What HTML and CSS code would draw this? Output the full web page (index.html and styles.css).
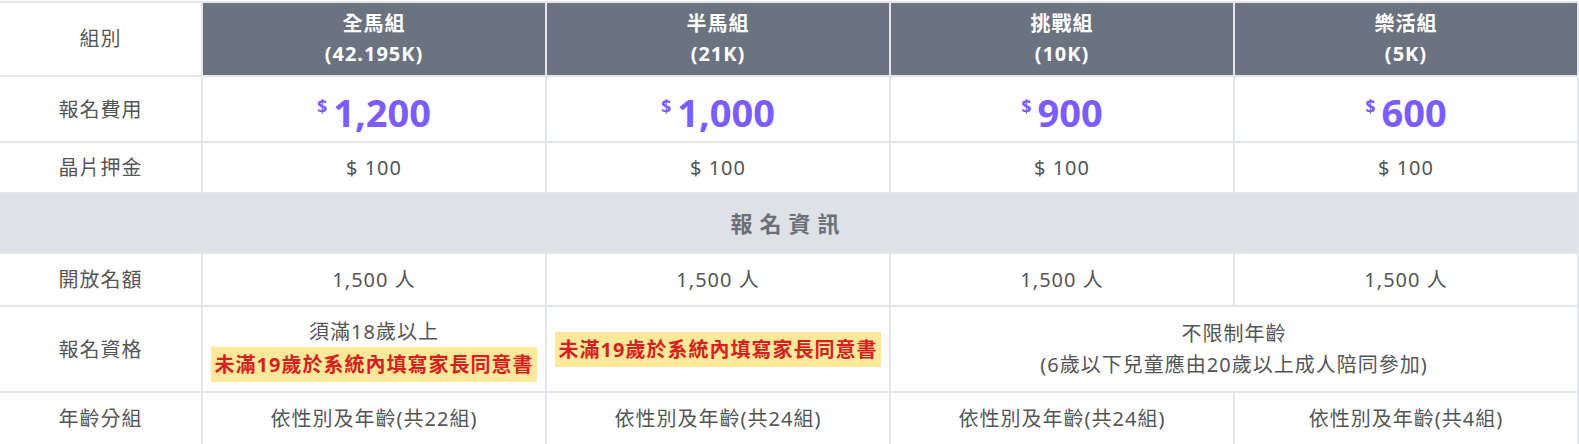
FILE: index.html
```html
<!DOCTYPE html>
<html lang="zh-Hant">
<head>
<meta charset="utf-8">
<title>報名資訊</title>
<link rel="stylesheet" href="styles.css">
</head>
<body>
<table class="race-table">
  <colgroup>
    <col class="col-label">
    <col><col><col><col>
  </colgroup>
  <thead>
    <tr>
      <th class="label">組別</th>
      <th class="group">全馬組<br>(42.195K)</th>
      <th class="group">半馬組<br>(21K)</th>
      <th class="group">挑戰組<br>(10K)</th>
      <th class="group">樂活組<br>(5K)</th>
    </tr>
  </thead>
  <tbody>
    <tr class="row-price">
      <th class="label">報名費用</th>
      <td><div class="price"><span class="cur">$</span><span class="amt">1,200</span></div></td>
      <td><div class="price"><span class="cur">$</span><span class="amt">1,000</span></div></td>
      <td><div class="price"><span class="cur">$</span><span class="amt">900</span></div></td>
      <td><div class="price"><span class="cur">$</span><span class="amt">600</span></div></td>
    </tr>
    <tr class="row-chip">
      <th class="label">晶片押金</th>
      <td>$ 100</td>
      <td>$ 100</td>
      <td>$ 100</td>
      <td>$ 100</td>
    </tr>
    <tr class="section">
      <td colspan="5">報名資訊</td>
    </tr>
    <tr>
      <th class="label">開放名額</th>
      <td>1,500 人</td>
      <td>1,500 人</td>
      <td>1,500 人</td>
      <td>1,500 人</td>
    </tr>
    <tr class="row-qual">
      <th class="label">報名資格</th>
      <td>須滿18歲以上<br><span class="note">未滿19歲於系統內填寫家長同意書</span></td>
      <td><span class="note">未滿19歲於系統內填寫家長同意書</span></td>
      <td colspan="2">不限制年齡<br>(6歲以下兒童應由20歲以上成人陪同參加)</td>
    </tr>
    <tr>
      <th class="label">年齡分組</th>
      <td>依性別及年齡(共22組)</td>
      <td>依性別及年齡(共24組)</td>
      <td>依性別及年齡(共24組)</td>
      <td>依性別及年齡(共4組)</td>
    </tr>
  </tbody>
</table>
</body>
</html>
```

FILE: styles.css
```css
html, body {
  margin: 0;
  padding: 0;
  background: #ffffff;
}

body {
  font-family: "Noto Sans", "Noto Sans CJK TC", sans-serif;
  color: #555555;
  overflow: hidden;
}

.race-table {
  width: 1581px;
  margin: 1px 0 0 -2px;
  table-layout: fixed;
  border-collapse: separate;
  border-spacing: 2px;
  background: #e3e6ea;
  font-size: 20px;
  letter-spacing: 1px;
}

.col-label {
  width: 201px;
}

.race-table th,
.race-table td {
  background: #ffffff;
  text-align: center;
  vertical-align: middle;
  padding: 10px 6px;
  line-height: 31px;
  font-weight: 400;
}

.race-table thead th {
  padding: 6px 6px;
  line-height: 30px;
}

.race-table thead th.group {
  background: #6b7280;
  color: #ffffff;
  font-weight: 700;
}

.race-table th.label {
  color: #555555;
  font-weight: 400;
}

.race-table .row-price td {
  padding: 13px 6px 6px;
  line-height: 45px;
}

.race-table .row-price th {
  padding: 9px 6px;
}

.race-table .row-chip td,
.race-table .row-chip th {
  padding: 9px 6px;
}

.race-table .row-qual td,
.race-table .row-qual th {
  padding: 9px 6px;
}

.price {
  display: flex;
  justify-content: center;
  align-items: flex-start;
  height: 45px;
  color: #7a5cff;
  font-weight: 700;
}

.price .cur {
  font-size: 18px;
  line-height: 18px;
  margin-top: 7px;
  margin-right: 6px;
  letter-spacing: 0;
}

.price .amt {
  font-size: 38px;
  line-height: 45px;
  letter-spacing: 0;
}

.race-table .section td {
  padding: 9px 6px;
  background: #dee1e6;
  color: #6b6f76;
  font-size: 22px;
  letter-spacing: 7px;
  line-height: 40px;
  font-weight: 700;
}

.note {
  display: inline-block;
  vertical-align: top;
  background: #fee89a;
  color: #d71f1f;
  font-weight: 700;
  padding: 2px 4px;
  line-height: 31px;
}
```
